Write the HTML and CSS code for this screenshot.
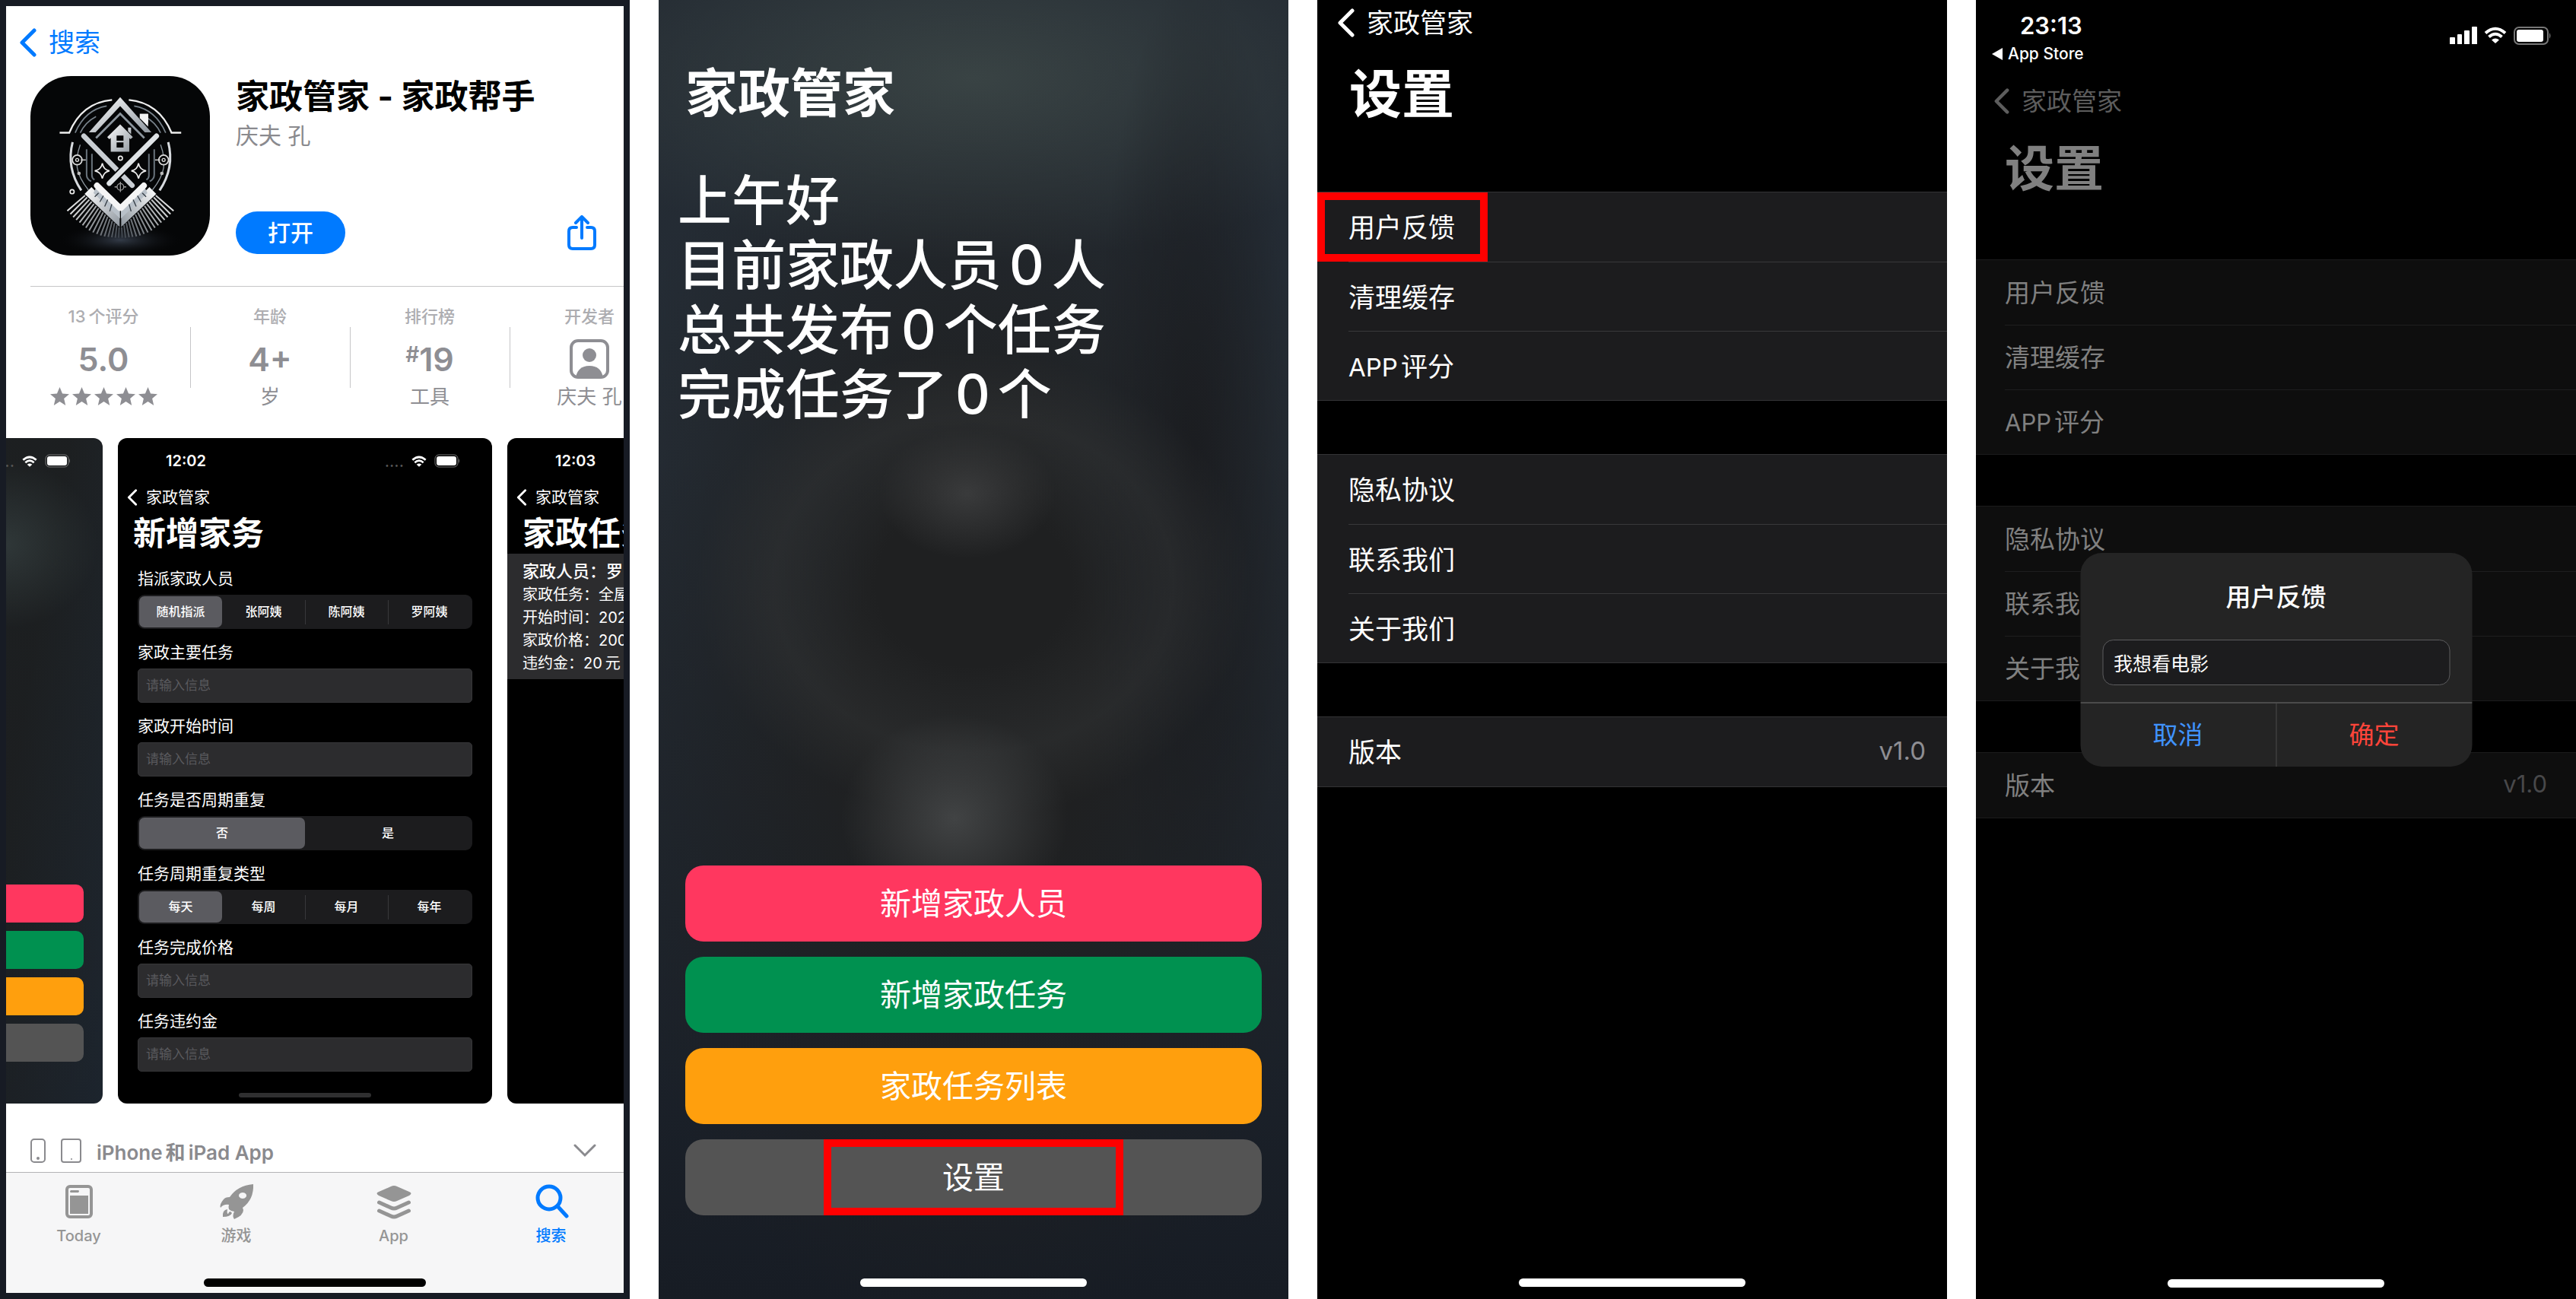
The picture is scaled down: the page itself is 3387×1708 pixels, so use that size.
FILE: index.html
```html
<!DOCTYPE html>
<html lang="zh-CN">

<head>
    <meta charset="utf-8" />
    <title>家政管家</title>
    <link rel="stylesheet" href="styles.css">
</head>

<body>
    <!-- 公用图标 -->
    <svg class="defs" aria-hidden="true">
        <symbol id="back" viewBox="0 0 22 38">
            <path d="M19 3L3 19l16 16" fill="none" stroke="currentColor" stroke-width="5" stroke-linecap="round" stroke-linejoin="round" />
        </symbol>
        <symbol id="wifi" viewBox="0 0 30 22">
            <path d="M2 8.500Q15-3 28 8.500M6.500 13.500Q15 6 23.500 13.500" fill="none" stroke="currentColor" stroke-width="4" />
            <path d="M10 17.500Q15 13.500 20 17.500L15 22z" fill="currentColor" />
        </symbol>
        <symbol id="battery" viewBox="0 0 50 24">
            <rect x="1" y="1" width="44" height="22" rx="6" fill="none" stroke="#777" stroke-width="2" />
            <rect x="4" y="4" width="35" height="16" rx="3" fill="currentColor" />
            <path d="M47 8q3 4 0 8z" fill="#777" />
        </symbol>
        <symbol id="battery-full" viewBox="0 0 34 18">
            <rect x="1" y="1" width="30" height="16" rx="5" fill="none" stroke="#777" stroke-width="1" />
            <rect x="3" y="3" width="26" height="12" rx="3" fill="currentColor" />
            <path d="M32 6q2 3 0 6z" fill="#777" />
        </symbol>
        <symbol id="star" viewBox="0 0 24 24">
            <path d="M12 0l3.400 8.200 8.600.6-6.600 5.600L19.400 23 12 18.300 4.600 23l2-8.600L0 8.800l8.600-.6z" fill="currentColor" />
        </symbol>
    </svg>

    <div class="board">
        <!-- App Store -->
        <section class="phone store">
            <a class="store-back" href="#"><svg class="back-icon"><use href="#back" /></svg>搜索</a>
            <div class="app">
                <svg class="logo" viewBox="60 60 706 706">
                    <defs>
                        <linearGradient id="metal" x1="0" y1="0" x2="1" y2="1">
                            <stop offset="0" stop-color="#fff" />
                            <stop offset="1" stop-color="#8f979f" />
                        </linearGradient>
                        <linearGradient id="bristle" gradientUnits="userSpaceOnUse" x1="205" y1="570" x2="414" y2="690">
                            <stop offset="0" stop-color="#eee" />
                            <stop offset="1" stop-color="#3a4149" />
                        </linearGradient>
                        <radialGradient id="floor">
                            <stop offset="0" stop-color="#333b48" />
                            <stop offset="1" stop-color="#090a0c" stop-opacity="0" />
                        </radialGradient>
                        <g id="half">
                            <path d="M175 283h38Q262 165 381 154" fill="none" stroke="#eee" stroke-width="7" />
                            <path d="M236 283Q276 192 360 178M256 283q20-42 62-64" fill="none" stroke="#78828b" stroke-width="5" />
                            <path d="M226 320q-26 100 34 190" fill="none" stroke="#d7dade" stroke-width="9" />
                            <path d="M256 330q-18 50-12 90t44 88" fill="none" stroke="#8c959d" stroke-width="4" />
                            <circle cx="244" cy="390" r="19" fill="#050607" stroke="#ddd" stroke-width="5" />
                            <circle cx="244" cy="390" r="6" fill="none" stroke="#ddd" stroke-width="4" />
                            <path d="M258 390h20" stroke="#ddd" stroke-width="4" />
                            <circle cx="251" cy="443" r="7" fill="#bbb" />
                            <path d="M281 348v100q0 18 18 26M302 366v86q0 10 10 16" fill="none" stroke="#69737c" stroke-width="6" />
                            <path d="M343 403q4 26 28 30-24 5-28 30-5-25-30-30 25-4 30-30z" fill="none" stroke="#eee" stroke-width="5" />
                            <path d="M275 530l-70 60M283 537l-66 66M292 546l-64 69M301 554l-61 72M310 563l-57 73M319 571l-54 76M328 580l-50 77M337 588l-46 79M346 596l-40 79M355 605l-34 76M364 613l-28 74M373 622l-22 69M382 630l-16 63M391 638l-11 56M400 646l-6 50M409 655l-2 41" stroke="url(#bristle)" stroke-width="6" />
                            <path d="M300 497L411 606V654L273 524z" fill="url(#metal)" />
                            <path d="M322 491L412 566V620L308 520z" fill="#b9c1c9" />
                            <path d="M322 491L411 578" stroke="#f5f5f5" stroke-width="24" stroke-linecap="round" />
                            <path d="M313 535l15-15M333 555l14-24M352 573l12-27M372 592l8-28" stroke="#333b43" stroke-width="4" />
                        </g>
                    </defs>
                    <rect x="60" y="60" width="706" height="706" rx="160" fill="#050607" />
                    <ellipse cx="414" cy="705" rx="240" ry="62" fill="url(#floor)" />
                    <use href="#half" />
                    <use href="#half" transform="translate(828 0) scale(-1 1)" />
                    <path d="M490 209h33v65l-33-34z" fill="#f2f3f4" />
                    <path d="M300 280L413 157l113 123" fill="none" stroke="#050607" stroke-width="42" />
                    <path d="M290 281L413 143 536 281H510L413 178 316 281z" fill="url(#metal)" />
                    <path d="M490 209h33v50l-33-34z" fill="#f2f3f4" />
                    <path d="M318 304l95-96 95 96" fill="none" stroke="#8b949c" stroke-width="8" />
                    <path d="M413 250l50 50-9 8-5-4v54H376v-54l-6 4-8-8zM444 263h12v26l-12-12z" fill="url(#metal)" />
                    <path d="M399 294h27v20h-27zM399 321h27v20h-27z" fill="#050607" />
                    <path d="M268 294L462 490" stroke="#050607" stroke-width="32" />
                    <path d="M270 296L460 490" stroke="#c9ced3" stroke-width="20" stroke-linecap="round" />
                    <path d="M556 296L363 490" stroke="#050607" stroke-width="32" />
                    <path d="M556 296L370 482" stroke="#dfe3e6" stroke-width="20" stroke-linecap="round" />
                    <circle cx="414" cy="383" r="8" fill="none" stroke="#eee" stroke-width="5" />
                    <circle cx="414" cy="496" r="13" fill="#050607" stroke="#999" stroke-width="4" />
                    <path d="M414 476v40M427 496h10M391 496h10" stroke="#999" stroke-width="4" />
                    <circle cx="224" cy="515" r="8" fill="none" stroke="#eee" stroke-width="5" />
                </svg>
                <div class="app-info">
                    <h1>家政管家 - 家政帮手</h1>
                    <p>庆夫 孔</p>
                    <div class="app-actions">
                        <button class="open">打开</button>
                        <button class="share" aria-label="分享">
                            <svg viewBox="0 0 38 46">
                                <path d="M12 16H7q-5 0-5 5v18q0 5 5 5h24q5 0 5-5V21q0-5-5-5h-5M19 30V3M11 10l8-8 8 8" fill="none" stroke="currentColor" stroke-width="4" stroke-linecap="round" stroke-linejoin="round" />
                            </svg>
                        </button>
                    </div>
                </div>
            </div>
            <ul class="stats">
                <li>
                    <span class="stat-name"><span class="latin">13</span>个评分</span>
                    <strong>5.0</strong>
                    <span class="stars"><svg><use href="#star" /></svg><svg><use href="#star" /></svg><svg><use href="#star" /></svg><svg><use href="#star" /></svg><svg><use href="#star" /></svg></span>
                </li>
                <li>
                    <span class="stat-name">年龄</span>
                    <strong>4+</strong>
                    <span class="stat-sub">岁</span>
                </li>
                <li>
                    <span class="stat-name">排行榜</span>
                    <strong><small>#</small>19</strong>
                    <span class="stat-sub">工具</span>
                </li>
                <li>
                    <span class="stat-name">开发者</span>
                    <strong>
                        <svg class="person" viewBox="0 0 52 52">
                            <rect x="2" y="2" width="48" height="48" rx="9" fill="none" stroke="currentColor" stroke-width="4" />
                            <circle cx="26" cy="21" r="9" fill="currentColor" />
                            <path d="M8 50q3-15 18-15t18 15z" fill="currentColor" />
                        </svg>
                    </strong>
                    <span class="stat-sub">庆夫 孔</span>
                </li>
            </ul>

            <div class="gallery">
                <div class="shot shot-home">
                    <div class="shot-status">
                        <span class="dots">..</span>
                        <svg class="s-wifi"><use href="#wifi" /></svg>
                        <svg class="s-battery"><use href="#battery-full" /></svg>
                    </div>
                    <div class="bars">
                        <i class="red"></i>
                        <i class="green"></i>
                        <i class="orange"></i>
                        <i class="gray"></i>
                    </div>
                </div>
                <div class="shot shot-add">
                    <div class="shot-status">
                        <time>12:02</time>
                        <span class="dots">....</span>
                        <svg class="s-wifi"><use href="#wifi" /></svg>
                        <svg class="s-battery"><use href="#battery-full" /></svg>
                    </div>
                    <a class="shot-back" href="#"><svg><use href="#back" /></svg>家政管家</a>
                    <h2>新增家务</h2>
                    <form class="add-form">
                        <div class="field">
                            <span>指派家政人员</span>
                            <div class="segment">
                                <label><input type="radio" name="who" checked>随机指派</label>
                                <label><input type="radio" name="who">张阿姨</label>
                                <label><input type="radio" name="who">陈阿姨</label>
                                <label><input type="radio" name="who">罗阿姨</label>
                            </div>
                        </div>
                        <div class="field">
                            <label for="task">家政主要任务</label>
                            <input id="task" type="text" placeholder="请输入信息">
                        </div>
                        <div class="field">
                            <label for="start">家政开始时间</label>
                            <input id="start" type="text" placeholder="请输入信息">
                        </div>
                        <div class="field">
                            <span>任务是否周期重复</span>
                            <div class="segment">
                                <label><input type="radio" name="repeat" checked>否</label>
                                <label><input type="radio" name="repeat">是</label>
                            </div>
                        </div>
                        <div class="field">
                            <span>任务周期重复类型</span>
                            <div class="segment">
                                <label><input type="radio" name="cycle" checked>每天</label>
                                <label><input type="radio" name="cycle">每周</label>
                                <label><input type="radio" name="cycle">每月</label>
                                <label><input type="radio" name="cycle">每年</label>
                            </div>
                        </div>
                        <div class="field">
                            <label for="price">任务完成价格</label>
                            <input id="price" type="text" placeholder="请输入信息">
                        </div>
                        <div class="field">
                            <label for="fine">任务违约金</label>
                            <input id="fine" type="text" placeholder="请输入信息">
                        </div>
                    </form>
                    <div class="shot-bar"></div>
                </div>
                <div class="shot shot-list">
                    <div class="shot-status">
                        <time>12:03</time>
                    </div>
                    <a class="shot-back" href="#"><svg><use href="#back" /></svg>家政管家</a>
                    <h2>家政任务</h2>
                    <div class="task">
                        <h3>家政人员：罗</h3>
                        <p>家政任务：全屋</p>
                        <p>开始时间：202</p>
                        <p>家政价格：200</p>
                        <p>违约金：<span class="latin">20</span>元</p>
                    </div>
                </div>
            </div>

            <div class="compat">
                <svg class="dev-phone" viewBox="0 0 20 32"><rect x="1" y="1" width="18" height="30" rx="4" fill="none" stroke="currentColor" stroke-width="2" /><circle cx="10" cy="26" r="2" fill="currentColor" /></svg>
                <svg class="dev-pad" viewBox="0 0 27 32"><rect x="1" y="1" width="25" height="30" rx="3" fill="none" stroke="currentColor" stroke-width="2" /><circle cx="14" cy="27" r="1" fill="currentColor" /></svg>
                <span><span class="latin">iPhone</span><span class="latin">和</span>iPad App</span>
                <svg class="down" viewBox="0 0 30 18"><path d="M2 2l13 13L28 2" fill="none" stroke="currentColor" stroke-width="3" stroke-linecap="round" /></svg>
            </div>

            <nav class="tabbar">
                <div class="tabs">
                    <a href="#">
                        <svg viewBox="0 0 46 46"><rect x="7" y="3" width="32" height="40" rx="4" fill="none" stroke="currentColor" stroke-width="4" /><path d="M11 15h24v24H11zM12 8h10q2 1 0 3H12q-2-1 0-3z" fill="currentColor" /></svg>
                        Today
                    </a>
                    <a href="#">
                        <svg viewBox="0 0 46 46"><path fill-rule="evenodd" d="M45 0Q46 20 31 31L32 34Q32 41 20 46Q17 42 20 36Q16 36 13 33Q12 30 13 27Q6 26 2 31Q0 27 6 20Q8 17 14 17Q24 2 45 0zM31 11a5 4 0 1 0 .1 0zM11 33Q10 39 12 39Q13 36 15 36L17 38Q15 43 5 43Q4 34 11 33z" fill="currentColor" /></svg>
                        游戏
                    </a>
                    <a href="#">
                        <svg viewBox="0 0 46 46"><path d="M23 2q2 0 4 1l16 7q5 2 0 5l-16 7q-4 2-8 0L3 15q-5-3 0-5l16-7q2-1 4-1z" fill="currentColor" /><path d="M3.500 24L19 31q4 2 8 0l15.500-7M3.500 35L19 42q4 2 8 0l15.500-7" fill="none" stroke="currentColor" stroke-width="5" stroke-linecap="round" /></svg>
                        App
                    </a>
                    <a class="active" href="#">
                        <svg viewBox="0 0 46 46"><circle cx="20" cy="18" r="15" fill="none" stroke="currentColor" stroke-width="5" /><path d="M31 29l12 13" stroke="currentColor" stroke-width="5" stroke-linecap="round" /></svg>
                        搜索
                    </a>
                </div>
                <div class="home-bar"></div>
            </nav>
        </section>

        <!-- 首页 -->
        <section class="phone home">
            <h1>家政管家</h1>
            <div class="summary">
                <p>上午好</p>
                <p>目前家政人员<b>0</b>人</p>
                <p>总共发布<b>0</b>个任务</p>
                <p>完成任务了<b>0</b>个</p>
            </div>
            <div class="menu">
                <button class="red">新增家政人员</button>
                <button class="green">新增家政任务</button>
                <button class="orange">家政任务列表</button>
                <button class="gray marked">设置</button>
            </div>
            <div class="home-bar"></div>
        </section>

        <!-- 设置 -->
        <section class="phone settings">
            <a class="nav-back" href="#"><svg class="back-icon"><use href="#back" /></svg>家政管家</a>
            <h1>设置</h1>
            <ul class="group">
                <li class="marked"><a href="#">用户反馈</a></li>
                <li><a href="#">清理缓存</a></li>
                <li><a href="#"><span><span class="latin">APP</span>评分</span></a></li>
            </ul>
            <ul class="group">
                <li><a href="#">隐私协议</a></li>
                <li><a href="#">联系我们</a></li>
                <li><a href="#">关于我们</a></li>
            </ul>
            <ul class="group">
                <li><a href="#">版本<em>v1.0</em></a></li>
            </ul>
            <div class="home-bar"></div>
        </section>

        <!-- 用户反馈弹窗 -->
        <section class="phone settings dim">
            <div class="status">
                <div class="status-left">
                    <time>23:13</time>
                    <a href="#"><svg viewBox="0 0 14 16"><path d="M14 0v16L0 8z" fill="currentColor" /></svg>App Store</a>
                </div>
                <div class="status-right">
                    <svg class="signal" viewBox="0 0 36 23"><path d="M0 15q0-1 1-1h5q1 0 1 1v8H0zM10 11q0-1 1-1h4q1 0 1 1v12h-6zM19 6q0-1 1-1h5q1 0 1 1v17h-7zM29 1q0-1 1-1h5q1 0 1 1v22h-7z" fill="currentColor" /></svg>
                    <svg class="wifi"><use href="#wifi" /></svg>
                    <svg class="battery"><use href="#battery" /></svg>
                </div>
            </div>
            <a class="nav-back" href="#"><svg class="back-icon"><use href="#back" /></svg>家政管家</a>
            <h1>设置</h1>
            <ul class="group">
                <li><a href="#">用户反馈</a></li>
                <li><a href="#">清理缓存</a></li>
                <li><a href="#"><span><span class="latin">APP</span>评分</span></a></li>
            </ul>
            <ul class="group">
                <li><a href="#">隐私协议</a></li>
                <li><a href="#">联系我们</a></li>
                <li><a href="#">关于我们</a></li>
            </ul>
            <ul class="group">
                <li><a href="#">版本<em>v1.0</em></a></li>
            </ul>
            <div class="home-bar"></div>
            <form class="alert">
                <label for="feedback">用户反馈</label>
                <input id="feedback" type="text" value="我想看电影">
                <div class="alert-btns">
                    <button type="button" class="cancel">取消</button>
                    <button type="button" class="ok">确定</button>
                </div>
            </form>
        </section>
    </div>
</body>

</html>
```

FILE: styles.css
```css
*,
*::after {
    box-sizing: border-box;
}

body,
ul,
p,
h1,
h2,
h3 {
    margin: 0;
    padding: 0;
}

body {
    background: #fff;
    font-family: Inter, "Noto Sans CJK SC", sans-serif;
}

ul {
    list-style: none;
}

a {
    color: inherit;
    text-decoration: none;
}

button,
input {
    font-family: inherit;
    margin: 0;
    border: none;
    outline: none;
}

button {
    padding: 0;
    background: none;
    cursor: pointer;
}

svg {
    display: block;
    flex: none;
}

em {
    font-style: normal;
}

/* 中英文之间留一点空 */
.latin {
    padding-right: 4px;
}

.defs {
    position: absolute;
    width: 0;
    height: 0;
}

.board {
    display: grid;
    grid-template-columns: 828fr 828fr 828fr 789fr;
    gap: 38px;
    min-height: 100vh;
}

.phone {
    display: flex;
    flex-direction: column;
    min-width: 0;
    overflow: hidden;
    background: #000;
    color: #fff;
}

.back-icon {
    width: 22px;
    height: 38px;
}

.home-bar {
    width: 36%;
    height: 11px;
    margin: auto auto 16px;
    border-radius: 6px;
    background: #fff;
}

.red {
    background: #ff375f;
}

.green {
    background: #009150;
}

.orange {
    background: #ff9f0d;
}

.gray {
    background: #545454;
}

/* App Store */
.store {
    border: 8px solid #171b24;
    background: #fff;
    color: #000;
}

.store-back {
    display: flex;
    align-items: center;
    gap: 16px;
    margin: 20px 18px 16px;
    font-size: 34px;
    line-height: 56px;
    color: #007aff;
}

.app {
    display: flex;
    gap: 34px;
    margin-left: 32px;
    padding-bottom: 40px;
    border-bottom: 1px solid #c6c6c8;
}

.logo {
    width: 236px;
    height: 236px;
}

.app-info {
    display: flex;
    flex: 1;
    flex-direction: column;
    white-space: nowrap;
}

.app-info h1 {
    font-size: 44px;
    font-weight: 700;
    line-height: 54px;
}

.app-info p {
    font-size: 30px;
    line-height: 48px;
    color: #8a8a8e;
}

.app-actions {
    display: flex;
    align-items: flex-end;
    justify-content: space-between;
    margin: auto 36px 2px 0;
}

.open {
    width: 144px;
    height: 56px;
    border-radius: 28px;
    background: #007aff;
    color: #fff;
    font-size: 30px;
    font-weight: 500;
    line-height: 56px;
}

.share {
    padding-bottom: 5px;
    color: #007aff;
}

.share svg {
    width: 38px;
    height: 46px;
}

.stats {
    display: grid;
    grid-template-columns: 228px 210px 210px 210px;
    padding: 25px 0 38px 14px;
    color: #8e8e93;
    white-space: nowrap;
}

.stats li {
    display: flex;
    flex-direction: column;
    align-items: center;
}

/* 分隔线比内容矮 */
.stats li + li {
    background: linear-gradient(#c6c6c8, #c6c6c8) 0 28px / 1px 80px no-repeat;
}

.stat-name {
    font-size: 22px;
    font-weight: 500;
    line-height: 28px;
    color: #adadb1;
}

.stats strong {
    display: flex;
    align-items: center;
    height: 60px;
    margin: 12px 0 4px;
    font-size: 43px;
    font-weight: 600;
    line-height: 60px;
}

.stats small {
    font-size: 28px;
    line-height: 36px;
    align-self: flex-start;
    padding-top: 6px;
}

.stat-sub {
    font-size: 26px;
    line-height: 32px;
}

.stars {
    display: flex;
    gap: 4px;
    padding-top: 3px;
}

.stars svg {
    width: 25px;
    height: 25px;
}

.person {
    width: 52px;
    height: 52px;
}

/* 截图预览 */
.gallery {
    display: grid;
    grid-template-columns: 127fr 492fr 153fr;
    gap: 20px;
}

.shot {
    min-width: 0;
    height: 875px;
    overflow: hidden;
    border-radius: 12px;
    background: #000;
    color: #fff;
    white-space: nowrap;
}

.shot-status {
    display: flex;
    align-items: center;
    gap: 10px;
    height: 28px;
    margin: 16px 42px 0 63px;
}

.shot-status time {
    margin-right: auto;
    font-size: 20px;
    font-weight: 600;
}

.dots {
    font-size: 22px;
    line-height: 20px;
    color: #555;
}

.s-wifi {
    width: 20px;
    height: 15px;
}

.s-battery {
    width: 34px;
    height: 18px;
}

.shot-home {
    border-radius: 0 12px 12px 0;
    background: radial-gradient(120px 110px at 0 140px, #2f3738, rgba(47, 55, 56, 0)), linear-gradient(100deg, rgba(28, 30, 31, .9) 30%, rgba(32, 41, 50, .6)), linear-gradient(#222a32, #171d26);
}

.shot-home .shot-status {
    justify-content: flex-end;
    margin-left: 0;
}

.bars {
    display: grid;
    gap: 11px;
    margin: 543px 25px 0 0;
}

.bars i {
    height: 50px;
    border-radius: 0 10px 10px 0;
}

.shot-back {
    display: flex;
    align-items: center;
    gap: 11px;
    margin: 18px 12px 0;
    font-size: 21px;
    line-height: 32px;
}

.shot-back svg {
    width: 14px;
    height: 22px;
}

.shot h2 {
    margin: 5px 20px 0;
    font-size: 43px;
    font-weight: 700;
    line-height: 52px;
}

.add-form {
    display: grid;
    gap: 15px;
    margin: 18px 26px 0;
}

.field {
    display: grid;
    gap: 5px;
    font-size: 21px;
    line-height: 32px;
}

.field > input {
    width: 100%;
    height: 45px;
    padding: 0 10px 2px;
    border: 1px solid #363638;
    border-radius: 5px;
    background: #2c2c2e;
    color: #fff;
    font-size: 17px;
}

.field > input::placeholder {
    color: #5a5a5e;
}

.segment {
    display: flex;
    height: 45px;
    padding: 2px;
    border-radius: 9px;
    background: #1c1c1e;
    font-size: 16px;
    font-weight: 500;
}

.segment label {
    flex: 1;
    line-height: 41px;
    text-align: center;
    background: linear-gradient(#38383b, #38383b) 0 50% / 1px 32px no-repeat;
}

.segment label:has(:checked) {
    border-radius: 7px;
    background: #5b5b60;
}

.segment label:has(:checked) + label {
    background: none;
}

.segment input {
    position: absolute;
    opacity: 0;
}

.shot-bar {
    width: 174px;
    height: 6px;
    margin: 28px auto 0;
    border-radius: 3px;
    background: #2f2f30;
}

.shot-list {
    border-radius: 12px 0 0 12px;
}

.task {
    margin-top: 1px;
    padding: 7px 20px 6px;
    background: #2c2c2e;
    font-size: 20px;
    line-height: 30px;
}

.task h3 {
    font-size: 22px;
    font-weight: 500;
    line-height: 32px;
}

.compat {
    display: flex;
    align-items: center;
    height: 90px;
    padding: 34px 36px 0 32px;
    font-size: 26px;
    font-weight: 600;
    color: #8a8a8e;
}

.dev-phone {
    width: 20px;
    height: 32px;
    margin-right: 20px;
}

.dev-pad {
    width: 27px;
    height: 32px;
    margin-right: 20px;
}

.down {
    width: 30px;
    height: 18px;
    margin-left: auto;
}

.tabbar {
    display: flex;
    flex: 1;
    flex-direction: column;
    border-top: 1px solid #b3b3b5;
    background: #f6f6f7;
}

.tabs {
    display: flex;
    margin: 0 -8px;
    padding-top: 15px;
}

.tabs a {
    display: flex;
    flex: 1;
    flex-direction: column;
    align-items: center;
    gap: 9px;
    font-size: 20px;
    font-weight: 500;
    line-height: 26px;
    color: #959595;
}

.tabs svg {
    width: 46px;
    height: 46px;
}

.tabs .active {
    color: #007aff;
}

.tabbar .home-bar {
    margin-bottom: 8px;
    background: #000;
}

/* 首页 */
.home {
    background:
        radial-gradient(14% 5% at 49% 38%, rgba(64, 65, 66, .8), rgba(64, 65, 66, 0)),
        radial-gradient(18% 8% at 47% 63%, #414344, rgba(65, 67, 68, 0)),
        radial-gradient(44% 18% at 50% 45%, rgba(50, 52, 53, 0) 35%, rgba(50, 52, 53, .5) 72%, rgba(50, 52, 53, 0)),
        radial-gradient(16% 38% at 85% 36%, rgba(25, 26, 29, .8), rgba(25, 26, 29, 0)),
        radial-gradient(70% 14% at 50% 6%, #394344, rgba(57, 67, 68, 0)),
        radial-gradient(62% 52% at 50% 52%, #1f2021 30%, rgba(31, 32, 33, 0)),
        linear-gradient(#232a32, #252d36 35%, #171c24);
}

.home h1 {
    margin: 82px 35px 0;
    font-size: 69px;
    font-weight: 700;
    line-height: 82px;
}

.summary {
    margin: 57px 25px 0;
    font-size: 71px;
    font-weight: 500;
    line-height: 85px;
}

.summary b {
    padding: 0 10px;
    font-weight: 500;
}

.menu {
    display: grid;
    gap: 20px;
    margin: auto 35px 0;
}

.menu button {
    height: 100px;
    border-radius: 24px;
    color: #fff;
    font-size: 41px;
    line-height: 100px;
}

.home .home-bar {
    margin-top: 83px;
}

/* 红框标记 */
.marked {
    position: relative;
}

.marked::after {
    content: "";
    position: absolute;
    border: 10px solid #f00;
}

.menu .marked::after {
    top: 0;
    bottom: 0;
    left: 24%;
    right: 24%;
}

/* 设置 */
.nav-back {
    display: flex;
    align-items: center;
    gap: 16px;
    margin: 0 27px;
    font-size: 35px;
    line-height: 60px;
}

.settings h1 {
    margin: 24px 42px 88px;
    font-size: 69px;
    font-weight: 700;
    line-height: 80px;
}

.group {
    margin-bottom: 70px;
    border: solid #333335;
    border-width: 1px 0;
    background: #1c1c1e;
}

.group a {
    display: flex;
    justify-content: space-between;
    align-items: center;
    height: 91px;
    margin-left: 41px;
    padding: 0 28px 4px 0;
    font-size: 35px;
}

.group li + li a {
    border-top: 1px solid #38383a;
}

.group em {
    color: #8e8e93;
    font-size: 33px;
}

.group .latin {
    font-size: 33px;
}

.group .marked::after {
    top: 0;
    left: 0;
    width: 224px;
    height: 91px;
}

/* 弹窗 */
.dim {
    position: relative;
    color: #808080;
}

.status {
    display: flex;
    justify-content: space-between;
    height: 101px;
    color: #fff;
}

.status-left {
    display: flex;
    flex-direction: column;
    margin: 14px 21px 0;
}

.status-left time {
    padding-left: 37px;
    font-size: 31px;
    font-weight: 600;
    line-height: 40px;
}

.status-left a {
    display: flex;
    align-items: center;
    gap: 7px;
    font-size: 21px;
    font-weight: 500;
    line-height: 34px;
}

.status-left svg {
    width: 14px;
    height: 16px;
}

.status-right {
    display: flex;
    gap: 9px;
    margin: 35px 32px 0;
}

.signal {
    width: 36px;
    height: 23px;
}

.wifi {
    width: 30px;
    height: 22px;
}

.battery {
    width: 50px;
    height: 24px;
}

.dim .nav-back {
    margin: 0 24px;
    font-size: 33px;
    line-height: 64px;
    color: #5d5d5d;
}

.dim .back-icon {
    width: 20px;
    height: 34px;
}

.dim h1 {
    margin: 19px 38px 81px;
    font-size: 65px;
    line-height: 76px;
}

.dim .group {
    margin-bottom: 67px;
    border-color: #1b1b1c;
    background: #0e0e0e;
}

.dim .group a {
    height: 85px;
    margin-left: 38px;
    padding-right: 38px;
    font-size: 33px;
}

.dim .group li + li a {
    border-color: #1e1e1f;
}

.dim .group em {
    color: #48484a;
    font-size: 31px;
}

.dim .group .latin {
    font-size: 31px;
}

.dim .home-bar {
    margin-bottom: 15px;
}

.alert {
    position: absolute;
    top: 727px;
    left: 50%;
    width: 515px;
    transform: translateX(-50%);
    overflow: hidden;
    border-radius: 28px;
    background: #242424;
    color: #fff;
}

.alert label {
    display: block;
    padding-top: 34px;
    font-size: 33px;
    font-weight: 500;
    line-height: 48px;
    text-align: center;
}

.alert > input {
    display: block;
    width: 457px;
    height: 60px;
    margin: 32px auto 22px;
    padding: 0 14px;
    border: 1px solid #5c5c5e;
    border-radius: 14px;
    background: #1c1c1e;
    color: #fff;
    font-size: 25px;
}

.alert-btns {
    display: flex;
    border-top: 2px solid #4b4b4b;
}

.alert-btns button {
    flex: 1;
    font-size: 33px;
    line-height: 83px;
}

.alert .cancel {
    border-right: 1px solid #4b4b4b;
    color: #4093ff;
}

.alert .ok {
    color: #ff453a;
}
```
